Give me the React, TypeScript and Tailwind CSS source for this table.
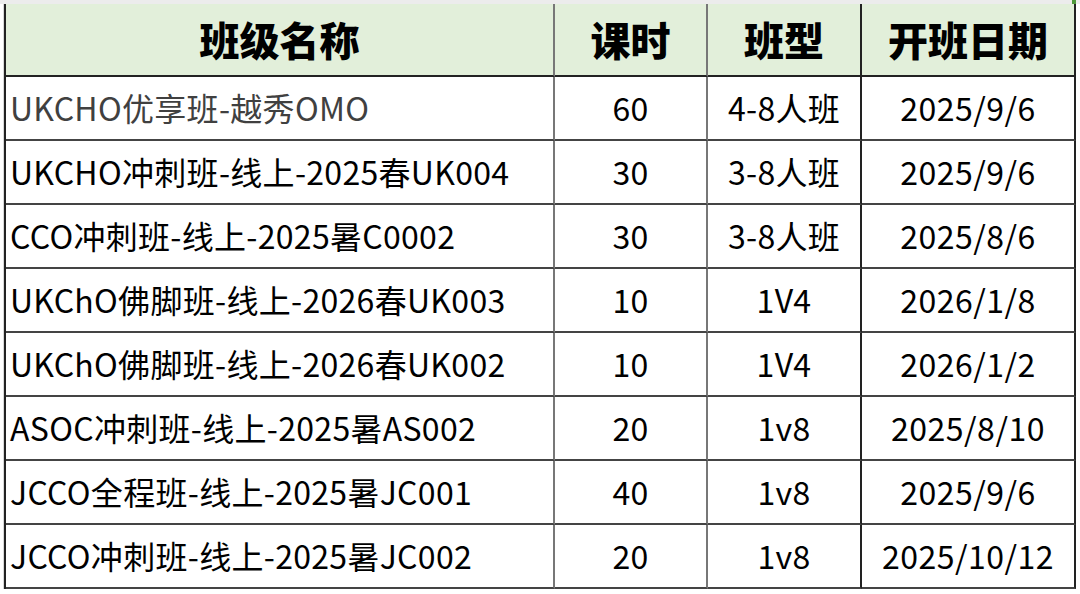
import React from 'react'

const rows = [
  { name: 'UKCHO优享班-越秀OMO', hours: '60', type: '4-8人班', date: '2025/9/6', muted: true },
  { name: 'UKCHO冲刺班-线上-2025春UK004', hours: '30', type: '3-8人班', date: '2025/9/6' },
  { name: 'CCO冲刺班-线上-2025暑C0002', hours: '30', type: '3-8人班', date: '2025/8/6' },
  { name: 'UKChO佛脚班-线上-2026春UK003', hours: '10', type: '1V4', date: '2026/1/8' },
  { name: 'UKChO佛脚班-线上-2026春UK002', hours: '10', type: '1V4', date: '2026/1/2' },
  { name: 'ASOC冲刺班-线上-2025暑AS002', hours: '20', type: '1v8', date: '2025/8/10' },
  { name: 'JCCO全程班-线上-2025暑JC001', hours: '40', type: '1v8', date: '2025/9/6' },
  { name: 'JCCO冲刺班-线上-2025暑JC002', hours: '20', type: '1v8', date: '2025/10/12' },
]

const font = { fontFamily: '"Noto Sans CJK SC", "Noto Sans", sans-serif' }

export default function App() {
  return (
    <div className="relative h-[594px] w-[1080px] overflow-hidden bg-white" style={font}>
      <div className="h-[4px] w-full bg-[#ececec]" />
      <div className="flex">
        <div className="w-[4px] border-r border-[#d8d8d8]" />
        <div className="grid w-[1070px] grid-cols-[549px_153px_154px_214px] border-l-2 border-[#222] text-black">
          {['班级名称', '课时', '班型', '开班日期'].map((h, i) => (
            <div
              key={h}
              className={`flex h-[73px] items-center justify-center border-b-2 border-[#222] bg-[#e2efda] pb-[2px] text-[40px] font-black ${
                i === 0 || i === 1 ? 'border-r-2 border-r-[#777]' : 'border-r-2 border-r-[#222]'
              }`}
            >
              {h}
            </div>
          ))}
          {rows.map((r, idx) => (
            <React.Fragment key={idx}>
              <div
                className={`flex h-[64px] items-center border-b-2 border-r-2 border-b-[#444] border-r-[#777] pb-[3px] pl-[4px] text-[32px] tracking-[0.3px] ${
                  r.muted ? 'text-[#404040]' : 'text-black'
                }`}
              >
                {r.name}
              </div>
              <div className="flex h-[64px] items-center justify-center border-b-2 border-r-2 border-b-[#444] border-r-[#777] pb-[3px] text-[32px] tracking-[0.3px]">
                {r.hours}
              </div>
              <div className="flex h-[64px] items-center justify-center border-b-2 border-r-2 border-b-[#444] border-r-[#222] pb-[3px] text-[32px] tracking-[0.3px]">
                {r.type}
              </div>
              <div className="flex h-[64px] items-center justify-center border-b-2 border-r-2 border-b-[#444] border-r-[#222] pb-[3px] text-[32px] tracking-[0.5px]">
                {r.date}
              </div>
            </React.Fragment>
          ))}
        </div>
      </div>
      <div className="absolute right-[4px] top-0 h-[4px] w-[4px] bg-[#4e9a3a]" />
    </div>
  )
}
